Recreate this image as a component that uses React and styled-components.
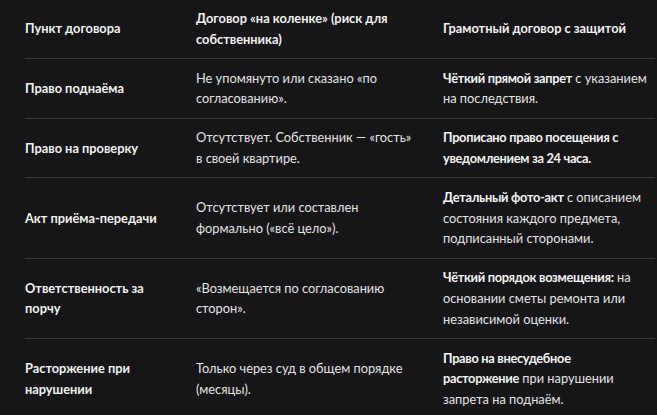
import React from 'react'
import styled, { createGlobalStyle } from 'styled-components';

const Global = createGlobalStyle`
  html, body {
    margin: 0;
    padding: 0;
    background: #161618;
  }
  body {
    font-family: Lato, "Open Sans", sans-serif;
    color: #ececec;
  }
`;

const rows = [
    {
        point: 'Право поднаёма',
        risk: 'Не упомянуто или сказано «по согласованию».',
        safe: <><b>Чёткий прямой запрет</b> с указанием на последствия.</>
    },
    {
        point: 'Право на проверку',
        risk: 'Отсутствует. Собственник — «гость» в своей квартире.',
        safe: <b>Прописано право посещения с уведомлением за 24 часа.</b>
    },
    {
        point: 'Акт приёма-передачи',
        risk: 'Отсутствует или составлен формально («всё цело»).',
        safe: <><b>Детальный фото-акт</b> с описанием состояния каждого предмета, подписанный сторонами.</>
    },
    {
        point: 'Ответственность за порчу',
        risk: '«Возмещается по согласованию сторон».',
        safe: <><b>Чёткий порядок возмещения:</b> на основании сметы ремонта или независимой оценки.</>
    },
    {
        point: 'Расторжение при нарушении',
        risk: 'Только через суд в общем порядке (месяцы).',
        safe: <><b>Право на внесудебное<br />расторжение</b> при нарушении запрета на поднаём.</>
    },
]

export default function App() {
    return (
        <Page>
            <Global />
            <Table>
                <colgroup>
                    <col style={{ width: 171 }} />
                    <col style={{ width: 247 }} />
                    <col style={{ width: 212 }} />
                </colgroup>
                <thead>
                    <tr>
                        <Head>Пункт договора</Head>
                        <Head>Договор «на коленке» (риск для собственника)</Head>
                        <Head $last>Грамотный договор с защитой</Head>
                    </tr>
                </thead>
                <tbody>
                    {rows.map((r, i) => (
                        <Row key={i}>
                            <Label>{r.point}</Label>
                            <Cell>{r.risk}</Cell>
                            <Cell $last>{r.safe}</Cell>
                        </Row>
                    ))}
                </tbody>
            </Table>
        </Page>
    )
}

const Page = styled.div`
  padding: 0 0 0 25px;
  overflow: hidden;
`;

const Table = styled.table`
  width: 630px;
  border-collapse: collapse;
  table-layout: fixed;
  font-size: 12.8px;
  line-height: 20.8px;
`;

const Head = styled.th`
  text-align: left;
  vertical-align: middle;
  font-weight: 700;
  color: #f2f2f2;
  padding: 8px ${p => p.$last ? '0' : '24px'} 8.5px 0;
  border-bottom: 1px solid #38383b;
`;

const Row = styled.tr`
  border-bottom: 1px solid #38383b;
  &:last-child { border-bottom: none; }
`;

const Label = styled.td`
  vertical-align: middle;
  font-weight: 700;
  color: #f2f2f2;
  padding: 8.5px 24px 8.5px 0;
`;

const Cell = styled.td`
  vertical-align: middle;
  color: #e4e4e4;
  padding: 8.5px ${p => p.$last ? '0' : '24px'} 8.5px 0;

  b {
    font-weight: 700;
    letter-spacing: -0.3px;
    color: #f4f4f4;
  }
`;
